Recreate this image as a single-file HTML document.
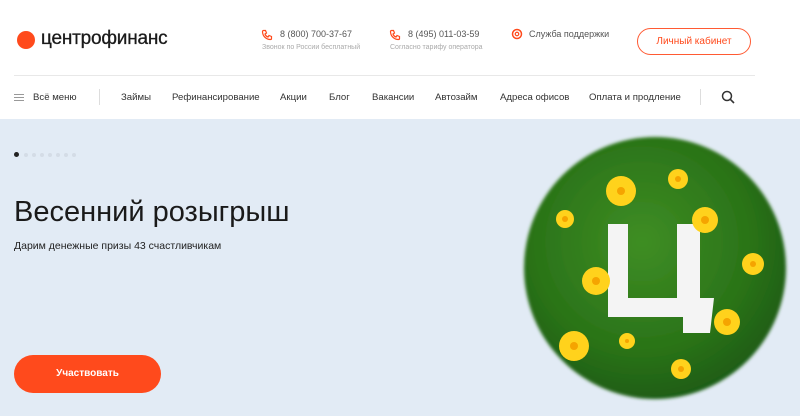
<!DOCTYPE html>
<html><head><meta charset="utf-8"><style>
*{margin:0;padding:0;box-sizing:border-box}
body{width:800px;height:416px;overflow:hidden;font-family:"Liberation Sans","Noto Sans CJK SC",sans-serif;background:#fff;position:relative;color:#222}
.a{position:absolute;white-space:nowrap}
.hero{position:absolute;left:0;top:119px;width:800px;height:297px;background:#e2ebf5}
.nav{font-size:9.6px;color:#333;top:92px}
</style></head><body>
<div class="a" style="left:17px;top:31px;width:18px;height:18px;border-radius:50%;background:#ff4a1c"></div>
<div class="a" style="left:41px;top:28px;font-size:19px;color:#1a1a1a;letter-spacing:-0.2px;-webkit-text-stroke:0.3px #1a1a1a">центрофинанс</div>
<svg class="a" style="left:261px;top:29px" width="12" height="12" viewBox="0 0 24 24"><path d="M5 3l4 0 2 5-3 2c1 3 3 5 6 6l2-3 5 2v4c0 1-1 2-2 2C10 21 3 14 3 5c0-1 1-2 2-2z" fill="none" stroke="#ff4a1c" stroke-width="2.4"/></svg>
<div class="a" style="left:280px;top:29px;font-size:9px;color:#555">8 (800) 700-37-67</div>
<div class="a" style="left:262px;top:44px;font-size:7px;color:#aaa">Звонок по России бесплатный</div>
<svg class="a" style="left:389px;top:29px" width="12" height="12" viewBox="0 0 24 24"><path d="M5 3l4 0 2 5-3 2c1 3 3 5 6 6l2-3 5 2v4c0 1-1 2-2 2C10 21 3 14 3 5c0-1 1-2 2-2z" fill="none" stroke="#ff4a1c" stroke-width="2.4"/></svg>
<div class="a" style="left:408px;top:29px;font-size:9px;color:#555">8 (495) 011-03-59</div>
<div class="a" style="left:390px;top:44px;font-size:7px;color:#aaa">Согласно тарифу оператора</div>
<svg class="a" style="left:511px;top:28px" width="12" height="12" viewBox="0 0 24 24"><circle cx="12" cy="12" r="9" fill="none" stroke="#ff4a1c" stroke-width="3"/><circle cx="12" cy="12" r="3.5" fill="none" stroke="#ff4a1c" stroke-width="2.5"/></svg>
<div class="a" style="left:529px;top:29px;font-size:9px;color:#555">Служба поддержки</div>
<div class="a" style="left:637px;top:28px;width:114px;height:27px;border:1.5px solid #ff5a33;border-radius:14px;text-align:center;line-height:25px;font-size:10px;color:#ff4a1c">Личный кабинет</div>
<div class="a" style="left:14px;top:75px;width:741px;height:1px;background:#e8e8e8"></div>
<div class="a" style="left:14px;top:94px;width:10px;height:7px;border-top:1px solid #999;border-bottom:1px solid #999"></div>
<div class="a" style="left:14px;top:97px;width:10px;height:1px;background:#999"></div>
<div class="a nav" style="left:33px">Всё меню</div>
<div class="a" style="left:99px;top:89px;width:1px;height:16px;background:#ddd"></div>
<div class="a nav" style="left:121px">Займы</div>
<div class="a nav" style="left:172px">Рефинансирование</div>
<div class="a nav" style="left:280px">Акции</div>
<div class="a nav" style="left:329px">Блог</div>
<div class="a nav" style="left:372px">Вакансии</div>
<div class="a nav" style="left:435px">Автозайм</div>
<div class="a nav" style="left:500px">Адреса офисов</div>
<div class="a nav" style="left:589px">Оплата и продление</div>
<div class="a" style="left:700px;top:89px;width:1px;height:16px;background:#ddd"></div>
<svg class="a" style="left:721px;top:90px" width="14" height="14" viewBox="0 0 14 14"><circle cx="6" cy="6" r="4.5" fill="none" stroke="#333" stroke-width="1.5"/><path d="M9.3 9.3L13 13" stroke="#333" stroke-width="1.6"/></svg>
<div class="hero"></div>
<div class="a" style="left:14px;top:152px;width:5px;height:5px;border-radius:50%;background:#222"></div>
<div class="a" style="left:24px;top:153px;display:flex;gap:4px">
<i style="width:4px;height:4px;border-radius:50%;background:#d4dce6"></i><i style="width:4px;height:4px;border-radius:50%;background:#d4dce6"></i><i style="width:4px;height:4px;border-radius:50%;background:#d4dce6"></i><i style="width:4px;height:4px;border-radius:50%;background:#d4dce6"></i><i style="width:4px;height:4px;border-radius:50%;background:#d4dce6"></i><i style="width:4px;height:4px;border-radius:50%;background:#d4dce6"></i><i style="width:4px;height:4px;border-radius:50%;background:#d4dce6"></i></div>
<div class="a" style="left:14px;top:196px;font-size:29px;color:#1a1a1a">Весенний розыгрыш</div>
<div class="a" style="left:14px;top:240px;font-size:10.5px;color:#222">Дарим денежные призы 43 счастливчикам</div>
<div class="a" style="left:14px;top:355px;width:147px;height:38px;border-radius:19px;background:#ff4a1c;color:#fff;font-size:10px;font-weight:bold;text-align:center;line-height:38px">Участвовать</div>
<svg class="a" style="left:515px;top:128px" width="280" height="280" viewBox="515 128 280 280">
<defs><radialGradient id="g" cx="0.45" cy="0.4" r="0.6"><stop offset="0" stop-color="#3f8e24"/><stop offset="0.7" stop-color="#2a7318"/><stop offset="1" stop-color="#1f5e12"/></radialGradient><filter id="b"><feGaussianBlur stdDeviation="1.5"/></filter></defs>
<circle cx="655" cy="268" r="131" fill="url(#g)" filter="url(#b)"/>
<path d="M608 224h20v74h49v-74h23v74h14l-4 35h-27v-16h-75z" fill="#f4f4f4"/>
<g fill="#ffd21c"><circle cx="621" cy="191" r="15"/><circle cx="678" cy="179" r="10"/><circle cx="565" cy="219" r="9"/><circle cx="705" cy="220" r="13"/><circle cx="753" cy="264" r="11"/><circle cx="596" cy="281" r="14"/><circle cx="727" cy="322" r="13"/><circle cx="574" cy="346" r="15"/><circle cx="627" cy="341" r="8"/><circle cx="681" cy="369" r="10"/></g>
<g fill="#f5a400"><circle cx="621" cy="191" r="4"/><circle cx="678" cy="179" r="3"/><circle cx="565" cy="219" r="3"/><circle cx="705" cy="220" r="4"/><circle cx="753" cy="264" r="3"/><circle cx="596" cy="281" r="4"/><circle cx="727" cy="322" r="4"/><circle cx="574" cy="346" r="4"/><circle cx="627" cy="341" r="2"/><circle cx="681" cy="369" r="3"/></g>
</svg>
</body></html>
